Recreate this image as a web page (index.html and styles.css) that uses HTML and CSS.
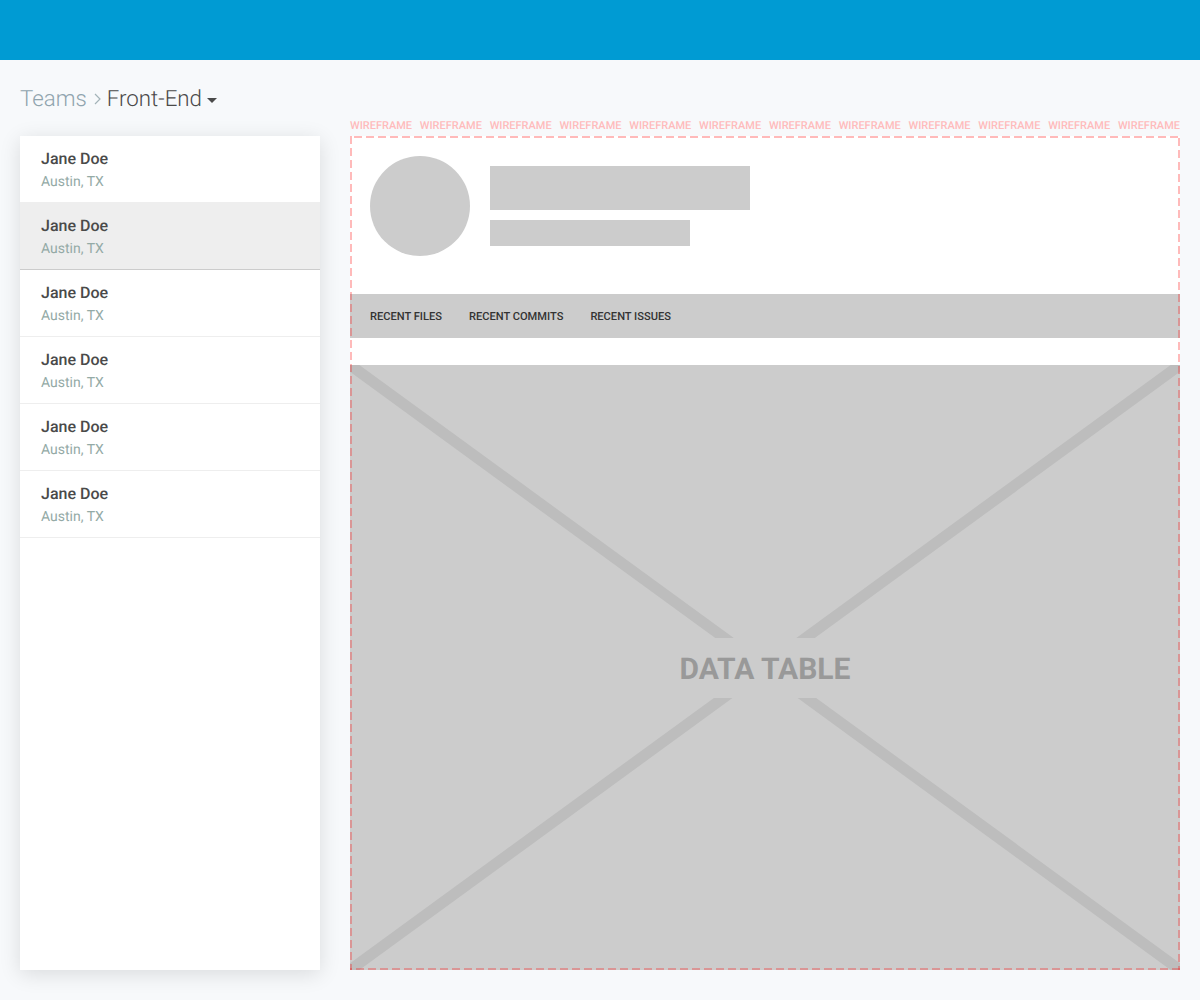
FILE: index.html
```html
<!DOCTYPE html>
<html>
<head>
  <title>Teams > Front-End</title>

  <link rel="stylesheet" href="styles.css">
</head>
<body>
  <header class="topbar"></header>

  <main class="page">
    <p class="crumbs">
      <span class="crumbs-root">Teams</span>
      <svg class="crumbs-chevron" width="7" height="12" viewBox="0 0 7 12"><path d="M1 1 6 6 1 11" fill="none" stroke="#a3b3b8" stroke-width="1.2"/></svg>
      <span class="crumbs-current">Front-End</span>
      <svg class="crumbs-caret" width="10" height="5" viewBox="0 0 10 5"><path d="M0 0h10L5 5z" fill="#4a4a4a"/></svg>
    </p>

    <div class="columns">
      <ul class="people">
        <li class="person"><b>Jane Doe</b><span>Austin, TX</span></li>
        <li class="person selected"><b>Jane Doe</b><span>Austin, TX</span></li>
        <li class="person"><b>Jane Doe</b><span>Austin, TX</span></li>
        <li class="person"><b>Jane Doe</b><span>Austin, TX</span></li>
        <li class="person"><b>Jane Doe</b><span>Austin, TX</span></li>
        <li class="person"><b>Jane Doe</b><span>Austin, TX</span></li>
      </ul>

      <section class="wire">
        <div class="wire-labels">
          <span>WIREFRAME</span><span>WIREFRAME</span><span>WIREFRAME</span><span>WIREFRAME</span>
          <span>WIREFRAME</span><span>WIREFRAME</span><span>WIREFRAME</span><span>WIREFRAME</span>
          <span>WIREFRAME</span><span>WIREFRAME</span><span>WIREFRAME</span><span>WIREFRAME</span>
        </div>

        <div class="profile">
          <div class="avatar"></div>
          <div class="bars">
            <div class="bar-title"></div>
            <div class="bar-sub"></div>
          </div>
        </div>

        <nav class="tabs">
          <span>RECENT FILES</span>
          <span>RECENT COMMITS</span>
          <span>RECENT ISSUES</span>
        </nav>

        <div class="table">
          <svg class="table-cross" viewBox="0 0 830 605" preserveAspectRatio="none">
            <path d="M0 0 830 605M830 0 0 605" stroke="#bdbdbd" stroke-width="11"/>
          </svg>
          <div class="table-label">DATA TABLE</div>
        </div>

        <div class="wire-outline"></div>
      </section>
    </div>
  </main>
</body>
</html>
```

FILE: styles.css
```css
html {
  background-color: #f7f9fb;
}

body {
  color: #4a4a4a;
  font-family: "Roboto", sans-serif;
  margin: 0;
  text-rendering: geometricPrecision;
}

ul {
  list-style-type: none;
  margin: 0;
  padding: 0;
}

.topbar {
  background-color: #009bd3;
  height: 60px;
}

.page {
  padding: 0 20px 30px;
}

.crumbs {
  align-items: center;
  display: flex;
  font-size: 22.3px;
  font-weight: 300;
  height: 26px;
  line-height: 26px;
  margin: 0;
  padding: 26px 0 24px;
}

.crumbs-root {
  color: #90a4ae;
}

.crumbs-chevron {
  margin: 0 6px 0 7px;
}

.crumbs-caret {
  margin: 2px 0 0 5px;
}

.columns {
  display: flex;
  gap: 30px;
}

.people {
  background-color: #fff;
  box-shadow: 0 4px 20px rgba(0, 0, 0, 0.12);
  height: 834px;
  width: 300px;
}

.person {
  border-bottom: 1px solid #eee;
  box-sizing: border-box;
  display: flex;
  flex-direction: column;
  height: 67px;
  padding: 14px 21px 0;
}

.person b {
  font-size: 16px;
  font-weight: 500;
  line-height: 18px;
}

.person span {
  color: #94aaa6;
  font-size: 14px;
  line-height: 18px;
  margin-top: 5px;
}

.selected {
  background-color: #eee;
  border-bottom-color: #ccc;
}

.wire {
  background-color: #fff;
  height: 834px;
  position: relative;
  width: 830px;
}

.wire-labels {
  bottom: 100%;
  color: #ffbbbb;
  display: flex;
  font-size: 11px;
  font-weight: 500;
  justify-content: space-between;
  left: 0;
  line-height: 13px;
  margin-bottom: 4px;
  position: absolute;
  right: 0;
}

/* 8 on, 4 off: the four sides don't start on the same phase */
.wire-outline {
  --dash: rgba(255, 0, 0, 0.27);
  background:
    repeating-linear-gradient(90deg, transparent 0 4px, var(--dash) 4px 12px) top / 100% 2px no-repeat,
    repeating-linear-gradient(90deg, var(--dash) 0 2px, transparent 2px 6px, var(--dash) 6px 12px) bottom / 100% 2px no-repeat,
    repeating-linear-gradient(180deg, var(--dash) 0 8px, transparent 8px 12px) left / 2px 100% no-repeat,
    repeating-linear-gradient(180deg, transparent 0 2px, var(--dash) 2px 10px, transparent 10px 12px) right / 2px 100% no-repeat;
  inset: 0;
  pointer-events: none;
  position: absolute;
}

.profile {
  box-sizing: border-box;
  display: flex;
  gap: 20px;
  height: 158px;
  padding-left: 20px;
  padding-top: 20px;
}

.avatar {
  background-color: #ccc;
  border-radius: 50%;
  height: 100px;
  width: 100px;
}

.bars {
  display: flex;
  flex-direction: column;
  gap: 10px;
  padding-top: 10px;
}

.bar-title {
  background-color: #ccc;
  height: 44px;
  width: 260px;
}

.bar-sub {
  background-color: #ccc;
  height: 26px;
  width: 200px;
}

.tabs {
  align-items: center;
  background-color: #ccc;
  color: #333;
  display: flex;
  font-size: 11.1px;
  font-weight: 500;
  gap: 27px;
  height: 44px;
  padding-left: 20px;
}

.table {
  background-color: #ccc;
  display: flex;
  height: 605px;
  justify-content: center;
  margin-top: 27px;
  position: relative;
}

.table-cross {
  height: 100%;
  left: 0;
  position: absolute;
  top: 0;
  width: 100%;
}

.table-label {
  align-self: flex-start;
  background-color: #ccc;
  color: #999;
  font-size: 30px;
  font-weight: 700;
  line-height: 57px;
  margin-top: 273px;
  padding-top: 3px;
  position: relative;
}
```
